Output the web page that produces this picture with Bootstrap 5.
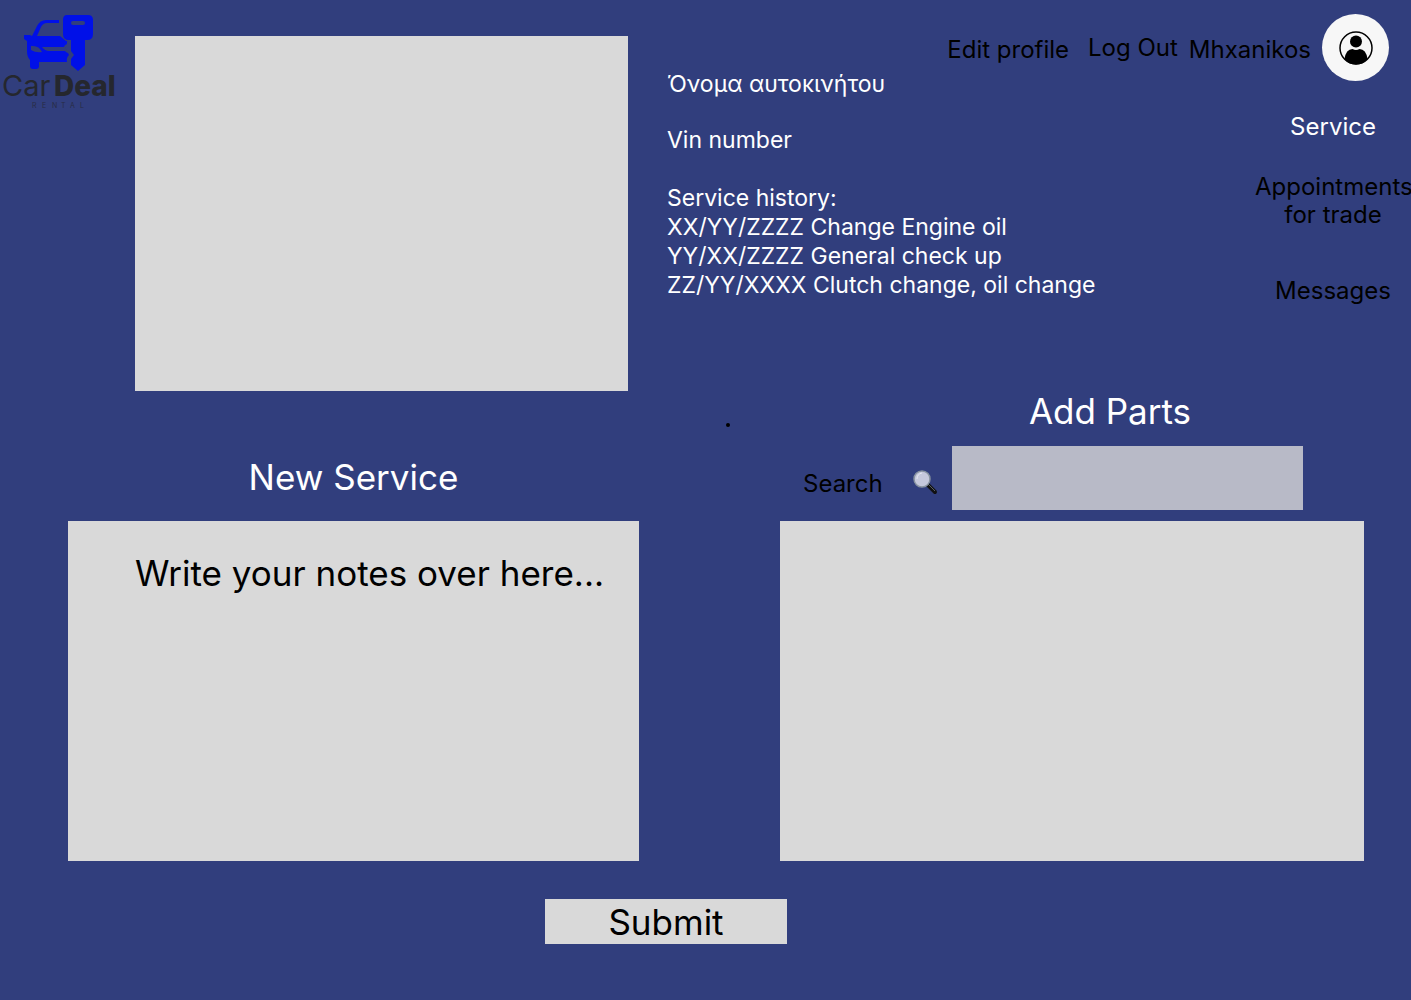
<!DOCTYPE html>
<html lang="en">
<head>
<meta charset="utf-8">
<meta name="viewport" content="width=device-width, initial-scale=1">
<title>CarDeal Rental - Service</title>
<link href="https://cdn.jsdelivr.net/npm/bootstrap@5.3.0/dist/css/bootstrap.min.css" rel="stylesheet">
<style>
  body { background: #313e7d; color: #000; font: 400 24px/28px Inter, "Liberation Sans", sans-serif; }
  a { color: #000; text-decoration: none; }
  .page-top { display: grid; grid-template-columns: 135fr 493fr 783fr; }
  .brand-logo { width: 118px; height: 112px; }
  .car-photo { height: 355px; margin-top: 36px; background: #d9d9d9; }
  .car-area { padding-left: 39px; }
  .car-head { height: 98px; }
  .car-name, .car-details { font-size: 23px; }
  .user-nav { padding: 14px 22px 0 0; gap: 11px; }
  .avatar-disc { width: 67px; height: 67px; background: #f7f7f7; }
  .car-details { line-height: 29px; padding-top: 28px; }
  .side-menu { width: 156px; padding-top: 15px; }
  .work-area { display: grid; grid-template-columns: 571fr 141fr 584fr; padding: 0 47px 0 68px; }
  .section-title { font-size: 35px; line-height: 40px; font-weight: 400; margin: 0; }
  .panel-box { height: 340px; background: #d9d9d9; border: 0; border-radius: 0; resize: none; }
  .notes-box { padding: 30px 20px 30px 67px; font-size: 35px; line-height: 44px; color: #000; outline: 0; }
  .notes-box::placeholder { color: #000; opacity: 1; }
  .panel-head { height: 130px; }
  .parts-head { padding-left: 76px; }
  .search-row { height: 64px; margin: 15px 61px 11px 23px; }
  .search-label { padding-top: 11px; }
  .search-icon { width: 26px; height: 26px; margin: 8px 14px 0 auto; }
  .search-box { width: 351px; height: 64px; background: #b8bac7; border: 0; padding: 0 16px; }
  .list-dot { width: 4px; height: 4px; margin: 32px 0 0 87px; background: #000; }
  .submit-row { padding: 38px 79px 56px 0; }
  .submit-btn { width: 242px; height: 45px; font-size: 35px; line-height: 44px; background: #d9d9d9; color: #000; border: 0; border-radius: 0; padding: 0; }
</style>
</head>
<body>
<main>
  <section class="page-top">
    <a href="#" aria-label="CarDeal Rental home">
      <svg class="brand-logo d-block" viewBox="0 0 118 112">
        <g fill="#0010e8">
          <path d="M32 36 37 26Q40 20 46 20H59V23H47Q43 23 41 27L37 36H60L66 41H67V44Q63 46 64 49Q65 52 68 53L69 55Q66 58 67 62H39V66Q39 69 36 69H33Q30 69 30 66V60Q27 57 27 51V41L24 39V35H30Z"/>
          <path d="M67 15H88Q93 15 93 20V34Q93 40 87 40H85V65L78 71 71 65V59L74 55 71 51V40H69Q63 40 63 34V20Q63 15 67 15Z"/>
        </g>
        <g fill="#313e7d">
          <rect x="71" y="21" width="14" height="4" rx="2"/>
          <path d="M31 46Q39 45 42 52Q36 53 31 50ZM42 47H65L67 51H49Q45 51 42 47Z"/>
        </g>
        <g fill="#25272e" font-family="Inter, sans-serif" font-weight="400">
          <text x="2" y="96" font-size="29">Car</text>
          <text x="54" y="96" font-size="28" font-weight="800">Deal</text>
          <text x="32 42 52 61 70 80" y="108" font-size="7" fill="#282c45">RENTAL</text>
        </g>
      </svg>
    </a>
    <div class="car-photo" role="img" aria-label="Car photo"></div>
    <div class="car-area text-white">
      <div class="car-head d-flex justify-content-between">
        <div class="car-name align-self-end">Όνομα αυτοκινήτου</div>
        <nav class="user-nav d-flex align-items-center align-self-start">
          <a class="me-2 pt-1" href="#">Edit profile</a>
          <a href="#">Log Out</a>
          <a class="pt-1" href="#">Mhxanikos</a>
          <a class="avatar-disc rounded-circle d-flex align-items-center justify-content-center" href="#" aria-label="Account">
            <svg width="34" height="34" viewBox="0 0 34 34"><circle cx="17" cy="17" r="16" fill="none" stroke="#000" stroke-width="1.5"/><circle cx="17" cy="10.5" r="6"/><path d="M5.500 28Q7 18 13.500 18Q17 20 20.500 18Q27 18 28.500 28Q24 33.500 17 33.500Q10 33.500 5.500 28Z"/></svg>
          </a>
        </nav>
      </div>
      <div class="d-flex justify-content-between">
        <div class="car-details">
          <div>Vin number</div>
          <br>
          <div>Service history:</div>
          <div>XX/YY/ZZZZ Change Engine oil</div>
          <div>YY/XX/ZZZZ General check up</div>
          <div>ZZ/YY/XXXX Clutch change, oil change</div>
        </div>
        <nav class="side-menu d-flex flex-column text-center">
          <a class="text-white" href="#">Service</a>
          <a class="mt-4 pt-2" href="#">Appointments for trade</a>
          <a class="mt-5" href="#">Messages</a>
        </nav>
      </div>
    </div>
  </section>

  <form>
    <section class="work-area">
      <div>
        <div class="panel-head d-flex align-items-end justify-content-center pb-4">
          <h2 class="section-title text-white"><label for="notes">New Service</label></h2>
        </div>
        <textarea class="panel-box notes-box d-block w-100" id="notes" placeholder="Write your notes over here..."></textarea>
      </div>
      <div><div class="list-dot rounded-circle"></div></div>
      <div>
        <div class="panel-head">
          <div class="parts-head text-center text-white"><h2 class="section-title">Add Parts</h2></div>
          <div class="search-row d-flex align-items-center">
            <label class="search-label" for="search">Search</label>
            <svg class="search-icon" viewBox="0 0 26 26"><path d="m16 16 7 7" stroke="#111" stroke-width="4" stroke-linecap="round"/><path d="m16 15 7 7" stroke="#596064" stroke-width="1"/><circle cx="10" cy="10" r="8" fill="#c5c8dc" stroke="#8792a0" stroke-width="1.500"/><path d="M5 10Q5 5 10 4" fill="none" stroke="#e5e7f1"/></svg>
            <input class="search-box" id="search" type="text">
          </div>
        </div>
        <div class="panel-box"></div>
      </div>
    </section>
    <div class="submit-row d-flex justify-content-center">
      <button class="submit-btn" type="submit">Submit</button>
    </div>
  </form>
</main>
<script src="https://cdn.jsdelivr.net/npm/bootstrap@5.3.0/dist/js/bootstrap.bundle.min.js"></script>
</body>
</html>
